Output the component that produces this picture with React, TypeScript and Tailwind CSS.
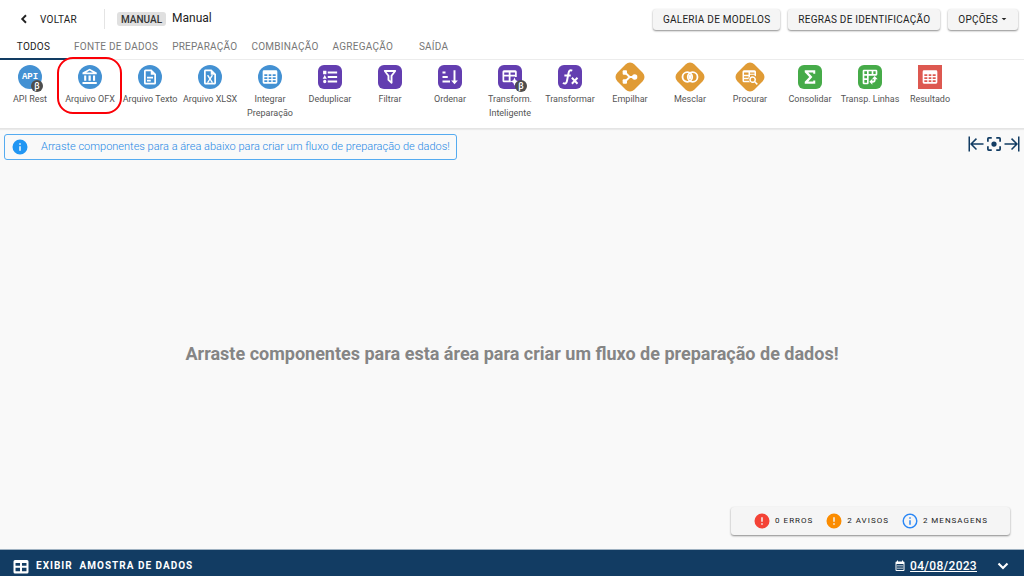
import { useState } from 'react';
import type { ReactNode } from 'react';
import { clsx } from 'clsx';

type Shape = 'circle' | 'rounded' | 'diamond' | 'square';

interface ToolItem {
  label: string;
  shape: Shape;
  color: string;
  icon: ReactNode;
  beta?: boolean;
  highlighted?: boolean;
}

const SHAPES: Record<Shape, string> = {
  circle: 'size-6 rounded-full',
  rounded: 'size-6 rounded-md',
  diamond: 'size-6 rotate-45 rounded-md',
  square: 'size-6',
};

const BLUE = 'bg-[#4391d3]';
const PURPLE = 'bg-[#633eb0]';
const ORANGE = 'bg-[#e09b35]';
const GREEN = 'bg-[#46ab49]';
const RED = 'bg-[#dd5850]';

function Icon({ d, className = 'size-[18px]' }: { d: string; className?: string }) {
  return (
    <svg viewBox="0 0 24 24" fill="currentColor" fillRule="evenodd" className={className} aria-hidden="true">
      <path d={d} />
    </svg>
  );
}

const icons = {
  chevronLeft: 'M16 7.4L11.4 12L16 16.6L14 18.6L7.4 12L14 5.4Z',
  chevronDown: 'M7 7.6L12 12.6L17 7.6L19 9.6L12 16.6L5 9.6Z',
  menuDown: 'M5,9L12,16L19,9H5Z',
  bank: 'M7,10H4.2V17H7V10M13,10H10V17H13V10M21,18.6H2V21.4H21V18.6M18.8,10H16V17H18.8V10M11.5,3.4L16,6H7L11.5,3.4M11.5,1L2,6V8.4H21V6L11.5,1Z',
  fileText:
    'M6,2A2,2 0 0,0 4,4V20A2,2 0 0,0 6,22H18A2,2 0 0,0 20,20V8L14,2H6M6.3,4.3H13V9H17.7V19.7H6.3V4.3M8,11.6V14H16V11.6H8M8,15.6V18H13V15.6H8Z',
  fileExcel:
    'M14 2H6C4.89 2 4 2.9 4 4V20C4 21.11 4.89 22 6 22H18C19.11 22 20 21.11 20 20V8L14 2M17.7 19.7H6.3V4.3H13V9H17.7V19.7M13.1 14.5L16.2 19.2H13.8L12 16L10.2 19.2H7.8L10.9 14.5L7.8 9.8H10.2L12 13L13.8 9.8H16.2L13.1 14.5Z',
  table:
    'M3 2H21A2 2 0 0 1 23 4V20A2 2 0 0 1 21 22H3A2 2 0 0 1 1 20V4A2 2 0 0 1 3 2M3.5 8V10.5H8V8H3.5M10 8V10.5H14V8H10M16 8V10.5H20.5V8H16M3.5 12.5V15H8V12.5H3.5M10 12.5V15H14V12.5H10M16 12.5V15H20.5V12.5H16M3.5 17V19.5H8V17H3.5M10 17V19.5H14V17H10M16 17V19.5H20.5V17H16Z',
  listType:
    'M5,9.2L7.8,14.2H2.2L5,9.2M2.8,3.8H7.2V8.2H2.8V3.8M5,20.2A2.2,2.2 0 0,0 7.2,18A2.2,2.2 0 0,0 5,15.8A2.2,2.2 0 0,0 2.8,18A2.2,2.2 0 0,0 5,20.2M9,4.7V7.3H21.5V4.7H9M9,19.3H21.5V16.7H9V19.3M9,13.3H21.5V10.7H9V13.3Z',
  filter:
    'M15.3,19.88C15.3,20.18 14.94,20.5 14.71,20.71C14.32,21.1 13.69,21.1 13.3,20.71L9.1,16.7C8.8,16.47 8.7,16.16 8.7,15.87V10.75L4.1,4.62C3.7,4.19 3.7,3.56 4.1,3.1C4.4,2.8 4.78,2.7 5,2.7H19C19.22,2.7 19.5,2.8 19.8,3.1C20.3,3.56 20.3,4.19 19.9,4.62L15.3,10.75V19.88M7.4,5.2L11.2,10.06V15.3L12.8,17V10.05L16.6,5.2H7.4Z',
  sort: 'M19.3 16.5H22.5L18 21.5L13.5 16.5H16.7V3H19.3V16.5M2 16.7H12V19.3H2V16.7M6 4.7V7.3H2V4.7H6M2 10.7H9V13.3H2V10.7Z',
  tableStar:
    'M4 3H19A2 2 0 0 1 21 5V12H18.7V11.3H12.7V16.7H13V19H4A2 2 0 0 1 2 17V5A2 2 0 0 1 4 3M4.3 6V9H10.3V6H4.3M12.7 6V9H18.7V6H12.7M4.3 11.3V16.7H10.3V11.3H4.3M18 12.5L19.6 16.4L23.5 18L19.6 19.6L18 23.5L16.4 19.6L12.5 18L16.4 16.4Z',
  tableSearch:
    'M4 3H18A2 2 0 0 1 20 5V11.2A5.5 5.5 0 0 0 18 10.3V9H12V11.6A5.5 5.5 0 0 0 10.4 14H10V11H4V13H10.1V15H4V17H10.6A5.5 5.5 0 0 0 12 19H4A2 2 0 0 1 2 17V5A2 2 0 0 1 4 3M4 6V9H10V6H4M12 6V7.5H18V6H12M15.5 11A4.5 4.5 0 0 1 19.3 17.9L22.5 21.1L21.1 22.5L17.9 19.3A4.5 4.5 0 1 1 15.5 11M15.5 13A2.5 2.5 0 1 0 15.5 18A2.5 2.5 0 1 0 15.5 13Z',
  pivot:
    'M3 1H21A2 2 0 0 1 23 3V8A2 2 0 0 1 21 10H10V21A2 2 0 0 1 8 23H3A2 2 0 0 1 1 21V3A2 2 0 0 1 3 1M3.5 3.5V7.5H7.5V3.5H3.5M10 3.5V7.5H14.5V3.5H10M17 3.5V7.5H20.5V3.5H17M3.5 10V14H7.5V10H3.5M3.5 16.5V20.5H7.5V16.5H3.5M19 10.5L23.5 15.2H20.5V16A4.5 4.5 0 0 1 16 20.5H15.5V23.5L11 19L15.5 14.8V17.8H16A1.8 1.8 0 0 0 17.8 16V15.2H14.8Z',
  sigma: 'M5 3H19V7.5H16.3V6H9.7L15.2 12L9.7 18H16.3V16.5H19V21H5V18.3L11 12L5 5.7Z',
  arrowCollapseLeft: 'M11.92,19.92L4,12L11.92,4.08L13.33,5.5L7.83,11H22V13H7.83L13.34,18.5L11.92,19.92M4,12V2H2V22H4V12Z',
  arrowCollapseRight: 'M12.08,4.08L20,12L12.08,19.92L10.67,18.5L16.17,13H2V11H16.17L10.67,5.5L12.08,4.08M20,12V22H22V2H20V12Z',
  centerFocus:
    'M12,8.5A3.5,3.5 0 0,0 8.5,12A3.5,3.5 0 0,0 12,15.5A3.5,3.5 0 0,0 15.5,12A3.5,3.5 0 0,0 12,8.5M19,19H15V21.3H19A2.3,2.3 0 0,0 21.3,19V15H19M19,2.7H15V5H19V9H21.3V5A2.3,2.3 0 0,0 19,2.7M5,5H9V2.7H5A2.3,2.3 0 0,0 2.7,5V9H5M5,15H2.7V19A2.3,2.3 0 0,0 5,21.3H9V19H5V15Z',
  info: 'M13,9H11V7H13M13,17H11V11H13M12,2A10,10 0 0,0 2,12A10,10 0 0,0 12,22A10,10 0 0,0 22,12A10,10 0 0,0 12,2Z',
  infoOutline:
    'M11,9H13V7H11M12,20C7.59,20 4,16.41 4,12C4,7.59 7.59,4 12,4C16.41,4 20,7.59 20,12C20,16.41 16.41,20 12,20M12,2A10,10 0 0,0 2,12A10,10 0 0,0 12,22A10,10 0 0,0 22,12A10,10 0 0,0 12,2M11,17H13V11H11V17Z',
  alert: 'M13,13H11V7H13M13,17H11V15H13M12,2A10,10 0 0,0 2,12A10,10 0 0,0 12,22A10,10 0 0,0 22,12A10,10 0 0,0 12,2Z',
  tableLarge:
    'M4,4H20A2,2 0 0,1 22,6V20A2,2 0 0,1 20,22H4A2,2 0 0,1 2,20V6A2,2 0 0,1 4,4M4.7,8V11.7H10.7V8H4.7M13.3,8V11.7H19.3V8H13.3M4.7,14.3V19H10.7V14.3H4.7M13.3,14.3V19H19.3V14.3H13.3Z',
  calendar:
    'M6 1H8V3H16V1H18V3H19A2 2 0 0 1 21 5V20A2 2 0 0 1 19 22H5A2 2 0 0 1 3 20V5A2 2 0 0 1 5 3H6V1M5 8V20H19V8H5M7 10H9V12H7V10M11 10H13V12H11V10M15 10H17V12H15V10M7 13H9V15H7V13M11 13H13V15H11V13M15 13H17V15H15V13M7 16H9V18H7V16M11 16H13V18H11V16M15 16H17V18H15V16Z',
};

function FunctionIcon() {
  return (
    <svg viewBox="0 0 24 24" fill="none" stroke="currentColor" strokeWidth="2.6" className="size-[18px]" aria-hidden="true">
      <path d="M15 3.5C11.5 2 10.5 4.5 10 7L8 17C7.4 20.5 5.5 21.5 2.5 20M4.5 10H13" />
      <path d="M14.5 13L22 21M22 13L14.5 21" />
    </svg>
  );
}

function StackIcon() {
  return (
    <svg viewBox="0 0 24 24" fill="currentColor" className="size-4" aria-hidden="true">
      <rect x="1" y="2" width="6.5" height="6.5" rx="1.5" />
      <rect x="1" y="15.5" width="6.5" height="6.5" rx="1.5" />
      <circle cx="19" cy="12" r="4" />
      <path d="M4.5 5L11.5 12L4.5 19M11 12H19" fill="none" stroke="currentColor" strokeWidth="3" />
    </svg>
  );
}

function MergeIcon() {
  return (
    <svg viewBox="0 0 24 24" fill="none" stroke="currentColor" strokeWidth="2.4" className="size-[18px]" aria-hidden="true">
      <circle cx="8.5" cy="12" r="6.5" />
      <circle cx="15.5" cy="12" r="6.5" />
      <path d="M12 8A6 6 0 0 1 12 16A6 6 0 0 1 12 8Z" fill="currentColor" strokeWidth="0" />
    </svg>
  );
}

const TOOLS: ToolItem[] = [
  {
    label: 'API Rest',
    shape: 'circle',
    color: BLUE,
    icon: <span className="block font-['Liberation_Mono',monospace] text-[9px] leading-none font-bold">API</span>,
    beta: true,
  },
  { label: 'Arquivo OFX', shape: 'circle', color: BLUE, icon: <Icon d={icons.bank} />, highlighted: true },
  { label: 'Arquivo Texto', shape: 'circle', color: BLUE, icon: <Icon d={icons.fileText} /> },
  { label: 'Arquivo XLSX', shape: 'circle', color: BLUE, icon: <Icon d={icons.fileExcel} /> },
  { label: 'Integrar Preparação', shape: 'circle', color: BLUE, icon: <Icon d={icons.table} className="size-4" /> },
  { label: 'Deduplicar', shape: 'rounded', color: PURPLE, icon: <Icon d={icons.listType} /> },
  { label: 'Filtrar', shape: 'rounded', color: PURPLE, icon: <Icon d={icons.filter} /> },
  { label: 'Ordenar', shape: 'rounded', color: PURPLE, icon: <Icon d={icons.sort} /> },
  { label: 'Transform. Inteligente', shape: 'rounded', color: PURPLE, icon: <Icon d={icons.tableStar} />, beta: true },
  { label: 'Transformar', shape: 'rounded', color: PURPLE, icon: <FunctionIcon /> },
  { label: 'Empilhar', shape: 'diamond', color: ORANGE, icon: <StackIcon /> },
  { label: 'Mesclar', shape: 'diamond', color: ORANGE, icon: <MergeIcon /> },
  { label: 'Procurar', shape: 'diamond', color: ORANGE, icon: <Icon d={icons.tableSearch} /> },
  { label: 'Consolidar', shape: 'rounded', color: GREEN, icon: <Icon d={icons.sigma} /> },
  { label: 'Transp. Linhas', shape: 'rounded', color: GREEN, icon: <Icon d={icons.pivot} className="size-4" /> },
  { label: 'Resultado', shape: 'square', color: RED, icon: <Icon d={icons.table} className="size-4" /> },
];

const TABS = ['Todos', 'Fonte de dados', 'Preparação', 'Combinação', 'Agregação', 'Saída'];

function ToolButton({ label, shape, color, icon, beta, highlighted }: ToolItem) {
  return (
    <button type="button" className="relative flex w-15 shrink-0 flex-col items-center gap-[3px] pt-[5px]">
      <span className="relative grid size-6 place-items-center text-white">
        <span className={clsx('col-start-1 row-start-1', SHAPES[shape], color)} />
        <span className="z-10 col-start-1 row-start-1">{icon}</span>
        {beta && (
          <span
            className={clsx(
              'absolute -bottom-[3px] z-20 grid size-3 place-items-center rounded-full bg-[#4d4d4d] text-[9px] leading-none font-medium',
              shape === 'circle' ? '-right-px' : '-right-[5px]',
            )}
          >
            β
          </span>
        )}
      </span>
      <span className="-mx-2 flex max-w-16 justify-center text-center text-[9px] leading-[14px] text-[#555]">
        {label.length > 14 ? label : <span className="whitespace-nowrap">{label}</span>}
      </span>
      {highlighted && (
        <span className="pointer-events-none absolute -top-[3px] -right-[2px] -left-[3px] z-30 h-[57px] rounded-2xl border-2 border-[#fb0007]" />
      )}
    </button>
  );
}

function RaisedButton({ children }: { children: ReactNode }) {
  return (
    <button
      type="button"
      className="flex h-[21px] items-center rounded-[3px] bg-[#f5f5f5] px-2.5 text-[10px] tracking-wide text-[#222] uppercase shadow-[0_1px_2px_rgba(0,0,0,0.45)]"
    >
      {children}
    </button>
  );
}

export default function App() {
  const [activeTab, setActiveTab] = useState(TABS[0]);

  return (
    <div className="flex min-h-screen flex-col bg-[#f9f9f9] font-['Roboto',sans-serif] text-[#222]">
      <header className="bg-white">
        <div className="flex h-[38px] items-center pr-[6px] pl-4">
          <a href="#voltar" className="flex items-center gap-2 text-[10px] tracking-wide">
            <Icon d={icons.chevronLeft} className="size-4" />
            VOLTAR
          </a>
          <span className="mr-3 ml-[27px] h-5 w-px bg-[#e4e4e4]" />
          <span className="flex h-[14px] items-center rounded-[3px] bg-[#e0e0e0] px-1 text-[10px] font-medium text-[#333]">
            MANUAL
          </span>
          <h1 className="ml-1.5 pb-[3px] text-[12px] leading-4">Manual</h1>
          <div className="ml-auto flex gap-2">
            <RaisedButton>Galeria de modelos</RaisedButton>
            <RaisedButton>Regras de identificação</RaisedButton>
            <RaisedButton>
              Opções
              <Icon d={icons.menuDown} className="ml-0.5 size-2" />
            </RaisedButton>
          </div>
        </div>

        <nav className="flex h-[22px] border-b border-[#ececec]">
          {TABS.map((tab) => (
            <button
              key={tab}
              type="button"
              onClick={() => setActiveTab(tab)}
              className={clsx(
                '-mb-px min-w-[67px] border-b-2 px-[7px] pb-[3px] text-[10px] leading-4 tracking-wide uppercase',
                tab === activeTab ? 'border-[#123c63] text-[#222]' : 'border-transparent text-[#777]',
              )}
            >
              {tab}
            </button>
          ))}
        </nav>

        <div className="flex h-[69px] items-start border-b border-[#e4e4e4] shadow-[0_1px_1px_rgba(0,0,0,0.06)]">
          {TOOLS.map((tool) => (
            <ToolButton key={tool.label} {...tool} />
          ))}
        </div>
      </header>

      <main className="flex flex-1 flex-col">
        <div className="flex items-start justify-between pt-[5px] pr-[3px] pl-1">
          <p className="flex h-[26px] items-center gap-3 rounded-[3px] border border-[#55abf0] pr-1.5 pl-[6px] text-[11px] font-light text-[#1e88e5]">
            <Icon d={icons.info} className="size-[18px] text-[#2196f3]" />
            Arraste componentes para a área abaixo para criar um fluxo de preparação de dados!
          </p>
          <div className="flex pt-px text-[#123c63]">
            <button type="button" aria-label="Recolher à esquerda">
              <Icon d={icons.arrowCollapseLeft} />
            </button>
            <button type="button" aria-label="Centralizar">
              <Icon d={icons.centerFocus} />
            </button>
            <button type="button" aria-label="Recolher à direita">
              <Icon d={icons.arrowCollapseRight} />
            </button>
          </div>
        </div>

        <div className="flex flex-1 items-center justify-center pt-[39px]">
          <p className="text-center text-[18px] font-bold text-[#858585]">
            Arraste componentes para esta área para criar um fluxo de preparação de dados!
          </p>
        </div>

        <div className="mr-[14px] mb-[14px] flex h-7 items-center gap-3 self-end rounded-[3px] bg-[#f5f5f5] px-[22px] text-[8px] tracking-[1px] shadow-[0_1px_2px_rgba(0,0,0,0.45)]">
          <span className="flex items-center gap-1">
            <Icon d={icons.alert} className="size-[18px] text-[#f44336]" />0 ERROS
          </span>
          <span className="flex items-center gap-1">
            <Icon d={icons.alert} className="size-[18px] text-[#fb8c00]" />2 AVISOS
          </span>
          <span className="flex items-center gap-1">
            <Icon d={icons.infoOutline} className="size-[18px] text-[#2b87f5]" />2 MENSAGENS
          </span>
        </div>
      </main>

      <footer className="flex h-[27px] items-center border-t border-[#9fb1c1] bg-[#123c63] pt-[5px] pr-3 pl-3 text-white">
        <button type="button" className="flex items-center gap-1.5 text-[10px] font-bold tracking-widest whitespace-pre">
          <Icon d={icons.tableLarge} />
          {'EXIBIR  AMOSTRA DE DADOS'}
        </button>
        <div className="ml-auto flex items-center">
          <Icon d={icons.calendar} className="mr-1 size-3" />
          <a href="#data" className="text-[12px] leading-4 font-medium tracking-wide underline">
            04/08/2023
          </a>
          <button type="button" aria-label="Expandir" className="ml-[17px]">
            <Icon d={icons.chevronDown} />
          </button>
        </div>
      </footer>
    </div>
  );
}
